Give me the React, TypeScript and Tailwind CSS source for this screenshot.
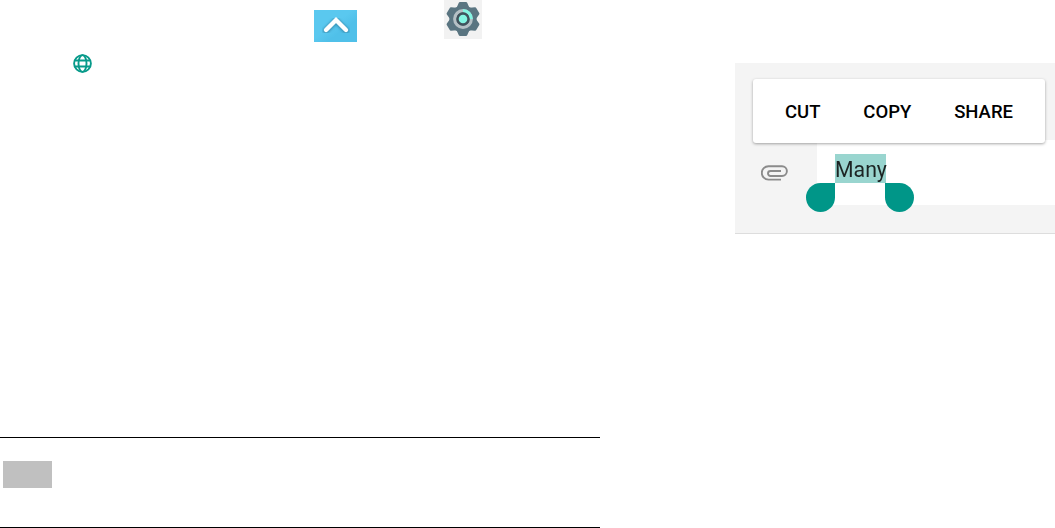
import type { ReactNode } from 'react';

const Chevron = () => (
  <svg width="43" height="32" viewBox="0 0 43 32">
    <defs>
      <linearGradient id="sky" x1="0" y1="0" x2="1" y2="1">
        <stop offset="0.45" stopColor="#5ac8ef" />
        <stop offset="0.65" stopColor="#50c0e9" />
      </linearGradient>
      <filter id="soft" x="-20%" y="-20%" width="140%" height="140%">
        <feGaussianBlur stdDeviation="1" />
      </filter>
    </defs>
    <rect width="43" height="32" fill="url(#sky)" />
    <path d="M12 20.5 22 10.500l10 10" fill="none" stroke="#348caf" strokeOpacity="0.8" strokeWidth="6.500" strokeLinecap="round" filter="url(#soft)" />
    <path d="M12 20 22 10l10 10" fill="none" stroke="#fff" strokeWidth="4.400" strokeLinecap="round" />
  </svg>
);

const TEETH = [0, 60, 120, 180, 240, 300];

const Gear = () => (
  <svg width="38" height="39" viewBox="0 0 38 39">
    <rect width="38" height="39" fill="#f2f2f2" />
    <g transform="translate(19 19)">
      <g fill="#5a7581">
        <circle r="13.6" />
        {TEETH.map((angle) => (
          <path key={angle} transform={`rotate(${angle})`} d="M-6.500-11-4.200-16.200Q-3.900-17-3-17H3Q3.900-17 4.200-16.200L6.500-11Z" />
        ))}
      </g>
      <circle r="8.300" fill="none" stroke="#b5c0c5" strokeWidth="3.200" />
      <path d="M0-8.300A8.300 8.300 0 0 1 8.300 0" fill="none" stroke="#84f5e2" strokeWidth="3.200" />
      <circle r="5.500" fill="#84f5e2" stroke="#40535c" strokeWidth="2.400" />
    </g>
  </svg>
);

const Globe = () => (
  <svg width="19" height="19" viewBox="0 0 19 19" fill="none" stroke="#079a8a" strokeWidth="1.900">
    <circle cx="9.500" cy="9.500" r="8.400" />
    <ellipse cx="9.500" cy="9.500" rx="4" ry="8.400" />
    <path d="M1.800 6.500h15.400M1.800 12.500h15.400" />
  </svg>
);

const Paperclip = () => (
  <svg width="27" height="16" viewBox="0 0 27 16" fill="none" stroke="#8b8b8b" strokeWidth="1.900">
    <path d="M20 14.600H7.500a6.700 6.700 0 0 1 0-13.400H21a4.900 4.900 0 0 1 0 9.800H9.500a2.500 2.500 0 0 1 0-5H20" />
  </svg>
);

const MenuItem = ({ children }: { children: ReactNode }) => (
  <button className="whitespace-nowrap text-[18.500px] leading-none font-medium text-black">{children}</button>
);

export default function App() {
  return (
    <div className="flex h-[528px] w-[1055px] overflow-hidden bg-white font-['Roboto',sans-serif]">
      <div className="flex w-[600px] shrink-0 flex-col">
        <div className="flex h-[42px] items-start pl-[314px]">
          <div className="mt-2.5"><Chevron /></div>
          <div className="ml-[87px]"><Gear /></div>
        </div>
        <div className="mt-3 ml-[73px]"><Globe /></div>
        <div className="mt-auto flex h-[91px] items-start border-y border-black pt-[23px] pl-[3px]">
          <div className="h-[27px] w-[49px] bg-[#c0c0c0]" />
        </div>
      </div>

      <div className="relative mt-[63px] ml-[135px] flex h-[171px] w-80 flex-col border-b border-[#dddddd] bg-[#f4f4f4]">
        <div className="mt-[77px] flex h-[65px]">
          <div className="w-[82px] pt-[25px] pl-[26px]"><Paperclip /></div>
          <div className="flex-1 bg-white pt-3.5 pl-[18px]">
            <div className="relative h-[29px] w-[51px] bg-[#99d5cf] text-[22.500px] leading-[31px] text-[#1c2423]">
              <span className="block origin-left scale-x-[0.945]">Many</span>
              <div className="absolute top-[29px] right-full size-[29px] rounded-full rounded-tr-none bg-[#009688]" />
              <div className="absolute top-[29px] left-[50px] size-[29px] rounded-full rounded-tl-none bg-[#009688]" />
            </div>
          </div>
        </div>

        <div className="absolute top-4 left-[18px] flex h-16 w-[292px] items-center justify-between rounded-[3px] bg-white pt-0.5 pr-8 pl-8 shadow-[0_1px_3px_rgba(0,0,0,0.35)]">
          <MenuItem>CUT</MenuItem>
          <MenuItem>COPY</MenuItem>
          <MenuItem>SHARE</MenuItem>
        </div>
      </div>
    </div>
  );
}
